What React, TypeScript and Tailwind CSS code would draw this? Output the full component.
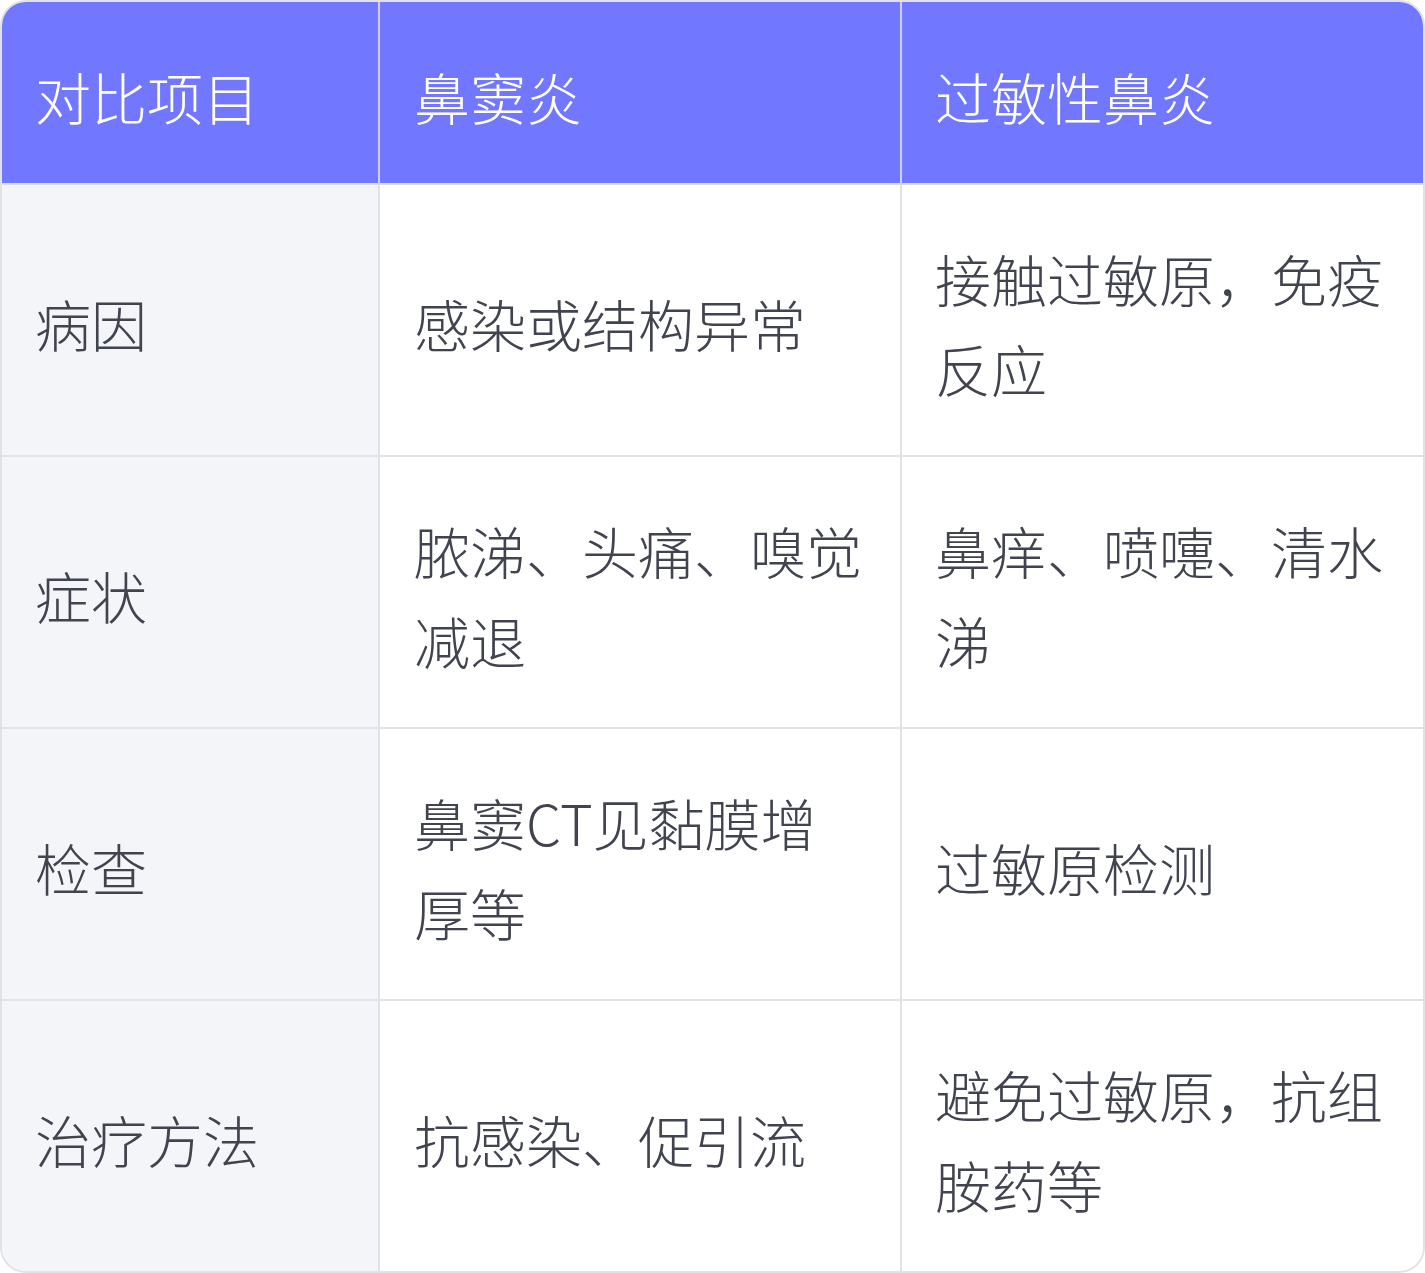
import React from 'react';

// comparison rows: item / sinusitis / allergic rhinitis
const rows: [string, string, string][] = [
    ['病因', '感染或结构异常', '接触过敏原，免疫反应'],
    ['症状', '脓涕、头痛、嗅觉减退', '鼻痒、喷嚏、清水涕'],
    ['检查', '鼻窦CT见黏膜增厚等', '过敏原检测'],
    ['治疗方法', '抗感染、促引流', '避免过敏原，抗组胺药等'],
];

const headers = ['对比项目', '鼻窦炎', '过敏性鼻炎'];
const padL = ['pl-[33px] pr-[37px]', 'pl-[34px] pr-[36px]', 'pl-[33px] pr-[37px]'];

export default function App() {
    return (
        <div
            className="w-[1425px] bg-white"
            style={{ fontFamily: '"Noto Sans CJK SC", "Noto Sans", sans-serif' }}
        >
            <div className="border-2 border-[#e1e2e6] rounded-[26px] overflow-hidden">
                <div className="grid grid-cols-[378px_522px_1fr] text-[56px] leading-[90px] font-light">
                    {/* Header */}
                    {headers.map((h, i) => (
                        <div
                            key={h}
                            className={`bg-[#7177ff] text-white ${padL[i]} pt-[49px] pb-[42px] flex items-center border-b-2 border-[#dcdde6] ${
                                i < 2 ? 'border-r-2 border-r-[#cdd0f4]' : ''
                            }`}
                        >
                            {h}
                        </div>
                    ))}

                    {/* Body */}
                    {rows.map((r, ri) => {
                        const last = ri === rows.length - 1;
                        return (
                            <React.Fragment key={r[0]}>
                                {r.map((c, ci) => (
                                    <div
                                        key={ci}
                                        className={`${ci === 0 ? 'bg-[#f4f5f9]' : 'bg-white'} text-[#41444f] ${padL[ci]} pt-[48px] pb-[42px] flex items-center border-[#e1e2e6] ${
                                            ci < 2 ? 'border-r-2' : ''
                                        } ${last ? '' : 'border-b-2'}`}
                                    >
                                        {c}
                                    </div>
                                ))}
                            </React.Fragment>
                        );
                    })}
                </div>
            </div>
        </div>
    );
}
